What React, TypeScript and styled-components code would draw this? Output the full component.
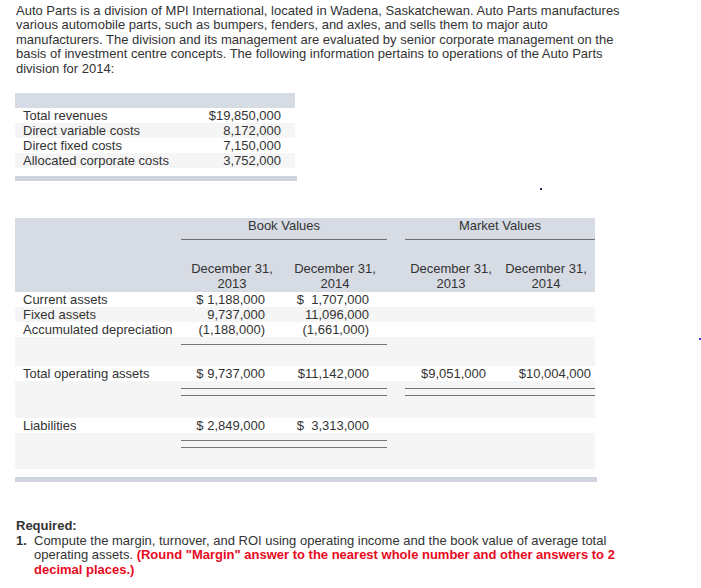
import React from "react"
import styled, { createGlobalStyle } from "styled-components"

const GlobalStyle = createGlobalStyle`
  html, body {
    margin: 0;
    padding: 0;
    background: #fff;
    overflow: hidden;
  }
  body {
    font-family: "Liberation Sans", Arial, sans-serif;
    font-size: 13px;
    color: #333;
  }
`

const Page = styled.div`
  position: relative;
  width: 701px;
  height: 588px;
  overflow: hidden;
`

// stray cursor specks that sit on top of the page
const Speck = styled.div<{ $x: number; $y: number; $color: string }>`
  position: absolute;
  left: ${(p) => p.$x}px;
  top: ${(p) => p.$y}px;
  width: 2px;
  height: 2px;
  background: ${(p) => p.$color};
`

const Intro = styled.div`
  margin: 4px 0 0 16px;
  line-height: 14.4px;
  white-space: nowrap;
`

const Line = styled.div``

const Block = styled.div<{ $width: number; $top: number }>`
  width: ${(p) => p.$width}px;
  margin: ${(p) => p.$top}px 0 0 15px;
`

const HeaderBar = styled.div`
  height: 15px;
  background: #d6dbe4;
`

const BottomBar = styled.div<{ $extra: number }>`
  height: 5px;
  margin-top: 8px;
  margin-right: -${(p) => p.$extra}px;
  background: #cfd4de;
`

const Table = styled.table`
  width: 100%;
  border-collapse: collapse;
  table-layout: fixed;
`

const Row = styled.tr<{ $shade?: "white" | "gray" | "head" }>`
  background: ${(p) => (p.$shade === "gray" ? "#f5f5f5" : p.$shade === "head" ? "#d6dbe4" : "#fff")};
`

const Label = styled.td`
  padding: 0 0 0 8px;
  height: 15px;
  line-height: 15px;
  white-space: nowrap;
`

const Value = styled.td<{ $pad: number }>`
  padding: 0 ${(p) => p.$pad}px 0 0;
  height: 15px;
  line-height: 15px;
  text-align: right;
  white-space: pre;
`

const GroupHead = styled.th<{ $ruled?: boolean }>`
  font-weight: normal;
  height: 21px;
  padding: 0;
  line-height: 15px;
  vertical-align: top;
  text-align: center;
  border-bottom: ${(p) => (p.$ruled ? "1px solid #6f6f6f" : "none")};
`

const DateHead = styled.th`
  font-weight: normal;
  height: 51px;
  padding: 0 0 1px;
  line-height: 14.5px;
  vertical-align: bottom;
  text-align: center;
`

const Spacer = styled.td<{ $h: number }>`
  height: ${(p) => p.$h}px;
  padding: 0;
  vertical-align: top;
`

const Rule = styled.div<{ $double?: boolean }>`
  margin-top: 7px;
  height: ${(p) => (p.$double ? "6px" : "0")};
  border-top: 1px solid #777;
  border-bottom: ${(p) => (p.$double ? "1px solid #777" : "none")};
`

const Required = styled.div`
  margin: 37px 0 0 16px;
  line-height: 14.5px;
  white-space: nowrap;
`

const Bold = styled.div`
  font-weight: bold;
`

const Item = styled.div`
  display: flex;
`

const ItemNo = styled.span`
  width: 18px;
  font-weight: bold;
`

const Hint = styled.span`
  color: #e8091d;
  font-weight: bold;
`

const summary: [string, string][] = [
  ["Total revenues", "$19,850,000"],
  ["Direct variable costs", "8,172,000"],
  ["Direct fixed costs", "7,150,000"],
  ["Allocated corporate costs", "3,752,000"],
]

const assets: [string, string, string][] = [
  ["Current assets", "$ 1,188,000", "$  1,707,000"],
  ["Fixed assets", "9,737,000", "11,096,000"],
  ["Accumulated depreciation", "(1,188,000)", "(1,661,000)"],
]

export default function App() {
  return (
    <Page>
      <GlobalStyle />
      <Intro>
        <Line>Auto Parts is a division of MPI International, located in Wadena, Saskatchewan. Auto Parts manufactures</Line>
        <Line>various automobile parts, such as bumpers, fenders, and axles, and sells them to major auto</Line>
        <Line>manufacturers. The division and its management are evaluated by senior corporate management on the</Line>
        <Line>basis of investment centre concepts. The following information pertains to operations of the Auto Parts</Line>
        <Line>division for 2014:</Line>
      </Intro>

      <Block $width={280} $top={17}>
        <HeaderBar />
        <Table>
          <colgroup>
            <col style={{ width: 170 }} />
            <col style={{ width: 110 }} />
          </colgroup>
          <tbody>
            {summary.map(([label, value], i) => (
              <Row key={label} $shade={i % 2 ? "gray" : "white"}>
                <Label>{label}</Label>
                <Value $pad={14}>{value}</Value>
              </Row>
            ))}
          </tbody>
        </Table>
        <BottomBar $extra={2} />
      </Block>

      <Block $width={580} $top={37}>
        <Table>
          <colgroup>
            <col style={{ width: 166 }} />
            <col style={{ width: 102 }} />
            <col style={{ width: 104 }} />
            <col style={{ width: 18 }} />
            <col style={{ width: 92 }} />
            <col style={{ width: 98 }} />
          </colgroup>
          <thead>
            <Row $shade="head">
              <GroupHead />
              <GroupHead colSpan={2} $ruled>
                Book Values
              </GroupHead>
              <GroupHead />
              <GroupHead colSpan={2} $ruled>
                Market Values
              </GroupHead>
            </Row>
            <Row $shade="head">
              <DateHead />
              <DateHead>
                December 31,
                <br />
                2013
              </DateHead>
              <DateHead>
                December 31,
                <br />
                2014
              </DateHead>
              <DateHead />
              <DateHead>
                December 31,
                <br />
                2013
              </DateHead>
              <DateHead>
                December 31,
                <br />
                2014
              </DateHead>
            </Row>
          </thead>
          <tbody>
            {assets.map(([label, a, b], i) => (
              <Row key={label} $shade={i % 2 ? "gray" : "white"}>
                <Label>{label}</Label>
                <Value $pad={18}>{a}</Value>
                <Value $pad={18}>{b}</Value>
                <Value $pad={0} />
                <Value $pad={0} />
                <Value $pad={0} />
              </Row>
            ))}
            <Row $shade="gray">
              <Spacer $h={29} />
              <Spacer $h={29} colSpan={2}>
                <Rule />
              </Spacer>
              <Spacer $h={29} colSpan={3} />
            </Row>
            <Row $shade="white">
              <Label>Total operating assets</Label>
              <Value $pad={18}>$ 9,737,000</Value>
              <Value $pad={18}>$11,142,000</Value>
              <Value $pad={0} />
              <Value $pad={11}>$9,051,000</Value>
              <Value $pad={4}>$10,004,000</Value>
            </Row>
            <Row $shade="gray">
              <Spacer $h={37} />
              <Spacer $h={37} colSpan={2}>
                <Rule $double />
              </Spacer>
              <Spacer $h={37} />
              <Spacer $h={37} colSpan={2}>
                <Rule $double />
              </Spacer>
            </Row>
            <Row $shade="white">
              <Label>Liabilities</Label>
              <Value $pad={18}>$ 2,849,000</Value>
              <Value $pad={18}>$  3,313,000</Value>
              <Value $pad={0} />
              <Value $pad={0} />
              <Value $pad={0} />
            </Row>
            <Row $shade="gray">
              <Spacer $h={36} />
              <Spacer $h={36} colSpan={2}>
                <Rule $double />
              </Spacer>
              <Spacer $h={36} colSpan={3} />
            </Row>
          </tbody>
        </Table>
        <BottomBar $extra={2} />
      </Block>

      <Required>
        <Bold>Required:</Bold>
        <Item>
          <ItemNo>1.</ItemNo>
          <div>
            Compute the margin, turnover, and ROI using operating income and the book value of average total
            <br />
            operating assets. <Hint>(Round "Margin" answer to the nearest whole number and other answers to 2</Hint>
            <br />
            <Hint>decimal places.)</Hint>
          </div>
        </Item>
      </Required>

      <Speck $x={540} $y={188} $color="#2a2560" />
      <Speck $x={699} $y={338} $color="#3a3adf" />
    </Page>
  )
}
